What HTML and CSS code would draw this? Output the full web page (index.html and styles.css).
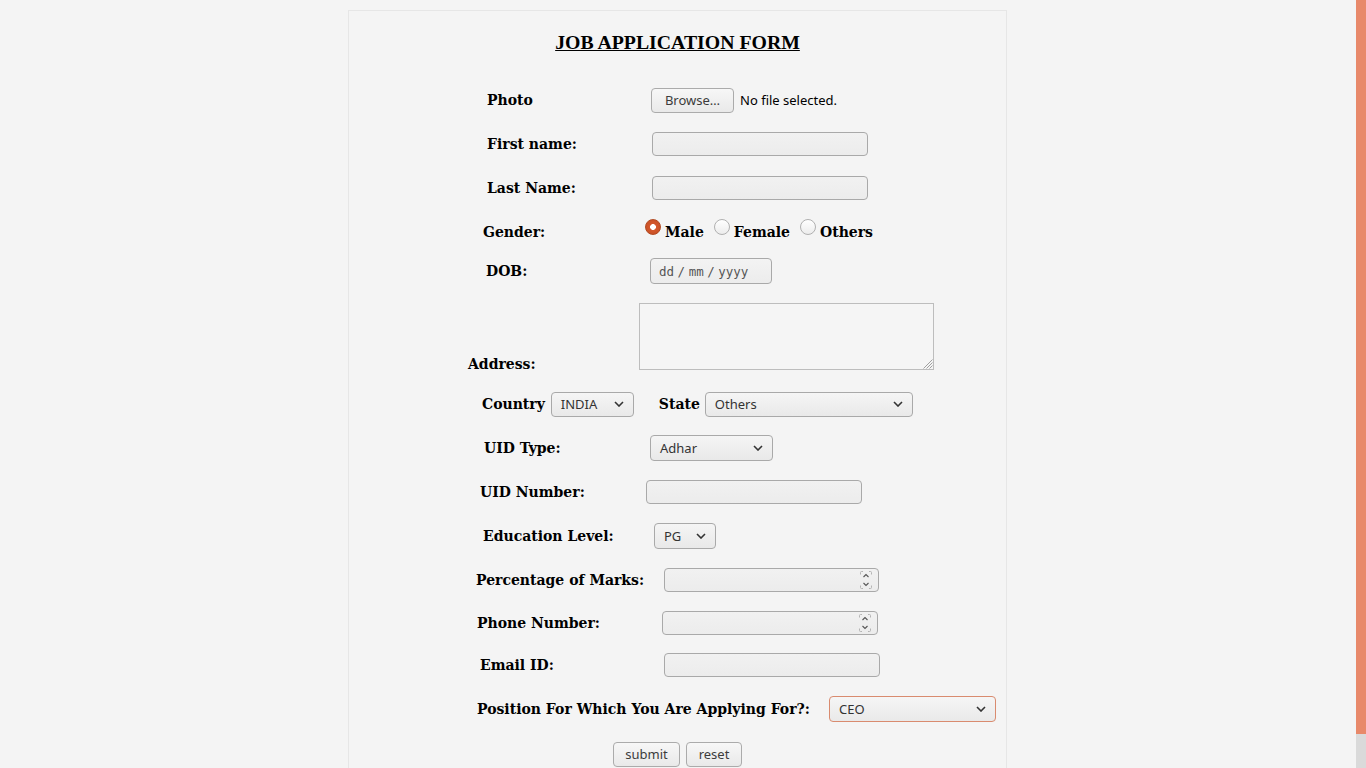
FILE: index.html
```html
<!DOCTYPE html>
<html>
<head>
<meta charset="utf-8">
<title>Job Application Form</title>
<link rel="stylesheet" href="styles.css">
</head>
<body>
<div class="page">
  <form class="card">
    <h3 class="title">JOB APPLICATION FORM</h3>

    <div class="row r44">
      <label class="lbl l-photo">Photo</label>
      <div class="file"><span class="btn browse">Browse…</span><span class="file-text">No file selected.</span></div>
    </div>

    <div class="row r44">
      <label class="lbl l-first">First name:</label>
      <input class="txt w216" type="text">
    </div>

    <div class="row r44">
      <label class="lbl l-last">Last Name:</label>
      <input class="txt w216" type="text">
    </div>

    <div class="row r40">
      <label class="lbl l-gender">Gender:</label>
      <div class="radios">
        <span class="radio checked"></span><span class="rlabel">Male</span>
        <span class="radio"></span><span class="rlabel">Female</span>
        <span class="radio"></span><span class="rlabel">Others</span>
      </div>
    </div>

    <div class="row r42">
      <label class="lbl l-dob">DOB:</label>
      <div class="date">dd / mm / yyyy</div>
    </div>

    <div class="row r-address">
      <label class="lbl l-address">Address:</label>
      <div class="textarea"><svg class="grip" width="12" height="12" viewBox="0 0 12 12"><path d="M11.5 2.5 L2.5 11.5 M11.5 5.5 L5.5 11.5 M11.5 8.5 L8.5 11.5" stroke="#a0a0a0" stroke-width="1"/></svg></div>
    </div>

    <div class="row r44">
      <label class="lbl l-country">Country</label>
      <div class="select s-country"><span>INDIA</span><svg class="chev" width="10" height="6" viewBox="0 0 10 6"><path d="M1 1 L5 5 L9 1" fill="none" stroke="#333" stroke-width="1.6"/></svg></div>
      <label class="lbl l-state">State</label>
      <div class="select s-state"><span>Others</span><svg class="chev" width="10" height="6" viewBox="0 0 10 6"><path d="M1 1 L5 5 L9 1" fill="none" stroke="#333" stroke-width="1.6"/></svg></div>
    </div>

    <div class="row r44">
      <label class="lbl l-uidtype">UID Type:</label>
      <div class="select s-uid"><span>Adhar</span><svg class="chev" width="10" height="6" viewBox="0 0 10 6"><path d="M1 1 L5 5 L9 1" fill="none" stroke="#333" stroke-width="1.6"/></svg></div>
    </div>

    <div class="row r44">
      <label class="lbl l-uidnum">UID Number:</label>
      <input class="txt w216" type="text">
    </div>

    <div class="row r44">
      <label class="lbl l-edu">Education Level:</label>
      <div class="select s-edu"><span>PG</span><svg class="chev" width="10" height="6" viewBox="0 0 10 6"><path d="M1 1 L5 5 L9 1" fill="none" stroke="#333" stroke-width="1.6"/></svg></div>
    </div>

    <div class="row r44">
      <label class="lbl l-pct">Percentage of Marks:</label>
      <div class="num w215">
        <span class="spin"><svg width="12" height="18" viewBox="0 0 12 18"><path d="M0.5 3.5 V1.5 Q0.5 0.5 1.5 0.5 H3 M9 0.5 H10.5 Q11.5 0.5 11.5 1.5 V3.5 M0.5 14.5 V16.5 Q0.5 17.5 1.5 17.5 H3 M9 17.5 H10.5 Q11.5 17.5 11.5 16.5 V14.5" fill="none" stroke="#b4b4b4" stroke-width="1"/><path d="M3.5 6 L6 3.5 L8.5 6 M3.5 12 L6 14.5 L8.5 12" fill="none" stroke="#555" stroke-width="1.1"/></svg></span>
      </div>
    </div>

    <div class="row r42">
      <label class="lbl l-phone">Phone Number:</label>
      <div class="num w216">
        <span class="spin"><svg width="12" height="18" viewBox="0 0 12 18"><path d="M0.5 3.5 V1.5 Q0.5 0.5 1.5 0.5 H3 M9 0.5 H10.5 Q11.5 0.5 11.5 1.5 V3.5 M0.5 14.5 V16.5 Q0.5 17.5 1.5 17.5 H3 M9 17.5 H10.5 Q11.5 17.5 11.5 16.5 V14.5" fill="none" stroke="#b4b4b4" stroke-width="1"/><path d="M3.5 6 L6 3.5 L8.5 6 M3.5 12 L6 14.5 L8.5 12" fill="none" stroke="#555" stroke-width="1.1"/></svg></span>
      </div>
    </div>

    <div class="row r42">
      <label class="lbl l-email">Email ID:</label>
      <input class="txt w216" type="text">
    </div>

    <div class="row r46">
      <label class="lbl l-pos">Position For Which You Are Applying For?:</label>
      <div class="select s-pos"><span>CEO</span><svg class="chev" width="10" height="6" viewBox="0 0 10 6"><path d="M1 1 L5 5 L9 1" fill="none" stroke="#333" stroke-width="1.6"/></svg></div>
    </div>

    <div class="row r44 buttons">
      <span class="btn b-submit">submit</span>
      <span class="btn b-reset">reset</span>
    </div>
  </form>
</div>
<div class="scrollbar"><div class="thumb"></div></div>
</body>
</html>
```
FILE: styles.css
```css
html, body {
  margin: 0;
  padding: 0;
  background: #f4f4f4;
  overflow: hidden;
  height: 768px;
}
.page {
  width: 1356px;
  padding-top: 10px;
  padding-left: 348px;
  box-sizing: border-box;
}
.card {
  width: 657px;
  border: 1px solid #e6e6e6;
  height: 800px;
  box-sizing: content-box;
  display: flex;
  flex-direction: column;
}
.title {
  margin: 0;
  padding: 20px 0 25px;
  line-height: 22px;
  font-family: "Liberation Serif", serif;
  font-size: 19.8px;
  font-weight: bold;
  text-align: center;
  text-decoration: underline;
  color: #000;
}
.row {
  display: flex;
  align-items: center;
  flex-shrink: 0;
  margin-left: -1px;
}
.r40 { height: 40px; }
.r42 { height: 42px; }
.r44 { height: 44px; }
.r46 { height: 46px; }
.r-address {
  height: 90px;
  align-items: flex-end;
  padding-bottom: 12px;
  box-sizing: border-box;
}
.lbl {
  font-family: "DejaVu Serif", serif;
  font-weight: bold;
  font-size: 14px;
  color: #000;
  flex-shrink: 0;
  white-space: nowrap;
}
.l-photo { margin-left: 139px; width: 164px; }
.l-first { margin-left: 139px; width: 165px; }
.l-last { margin-left: 139px; width: 165px; }
.l-gender { margin-left: 135px; width: 162px; margin-top: 3px; }
.l-dob { margin-left: 138px; width: 164px; }
.l-address { margin-left: 120px; width: 171px; margin-bottom: -2px; }
.l-country { margin-left: 134px; margin-right: 6px; }
.l-state { margin-left: 25px; margin-right: 5px; }
.l-uidtype { margin-left: 136px; width: 166px; }
.l-uidnum { margin-left: 132px; width: 166px; }
.l-edu { margin-left: 135px; width: 171px; }
.l-pct { margin-left: 128px; width: 188px; }
.l-phone { margin-left: 129px; width: 185px; }
.l-email { margin-left: 132px; width: 184px; }
.l-pos { margin-left: 129px; width: 352px; }

.btn, .file-text, .select {
  font-family: "Noto Sans", "DejaVu Sans", sans-serif;
  font-size: 13px;
}
.txt, .num {
  height: 24px;
  box-sizing: border-box;
  border: 1px solid #a9a9a9;
  border-radius: 4px;
  background: linear-gradient(#f1f1f1, #ececec);
  padding: 0;
  margin: 0;
  outline: none;
}
.w216 { width: 216px; }
.w215 { width: 215px; }
.num {
  display: flex;
  align-items: center;
  justify-content: flex-end;
  padding-right: 6px;
}
.spin { display: flex; }
.file {
  display: flex;
  align-items: center;
}
.btn {
  display: inline-flex;
  align-items: center;
  justify-content: center;
  box-sizing: border-box;
  height: 25px;
  border: 1px solid #ababab;
  border-radius: 4px;
  background: linear-gradient(#f7f7f7, #e9e9e9);
  color: #3c3c3c;
}
.browse { width: 83px; }
.file-text { margin-left: 6px; color: #000; }

.radios {
  display: flex;
  align-items: center;
  font-family: "DejaVu Serif", serif;
  font-weight: bold;
  font-size: 14px;
  color: #000;
}
.radio {
  width: 16px;
  height: 16px;
  box-sizing: border-box;
  border-radius: 50%;
  border: 1px solid #b0b0b0;
  background: linear-gradient(#ffffff, #ececec);
  margin-right: 4px;
  margin-left: 10px;
  position: relative;
  top: -3px;
}
.radio:first-child { margin-left: 0; }
.radio.checked {
  border: 1px solid #b24a22;
  background: radial-gradient(circle, #ffffff 0 2.6px, #d4582c 3.2px, #c34d22 100%);
}
.rlabel { margin-top: 3px; }

.date {
  width: 122px;
  height: 26px;
  box-sizing: border-box;
  border: 1px solid #a9a9a9;
  border-radius: 4px;
  background: linear-gradient(#f3f3f3, #ececec);
  display: flex;
  align-items: center;
  padding-left: 8px;
  font-family: "DejaVu Sans Mono", monospace;
  font-size: 12.5px;
  word-spacing: -4px;
  color: #555;
}
.textarea {
  width: 295px;
  height: 67px;
  box-sizing: border-box;
  border: 1px solid #bdbdbd;
  background: #f5f5f5;
  position: relative;
}
.grip { position: absolute; right: 0; bottom: 0; }

.select {
  height: 25px;
  box-sizing: border-box;
  border: 1px solid #a9a9a9;
  border-radius: 4px;
  background: linear-gradient(#f5f5f5, #e9e9e9);
  display: flex;
  align-items: center;
  justify-content: space-between;
  padding: 0 9px 0 9px;
  color: #333;
  flex-shrink: 0;
}
.s-country { width: 83px; }
.s-state { width: 208px; }
.s-uid { width: 123px; height: 26px; }
.s-edu { width: 62px; height: 26px; }
.s-pos { width: 167px; height: 26px; border-color: #d98b6f; }

.buttons { padding-left: 265px; gap: 6px; }
.b-submit { width: 67px; }
.b-reset { width: 56px; }

.scrollbar {
  position: fixed;
  top: 0;
  right: 0;
  width: 10px;
  height: 768px;
  background: #dadada;
}
.thumb {
  height: 734px;
  background: #e8896a;
}
```
